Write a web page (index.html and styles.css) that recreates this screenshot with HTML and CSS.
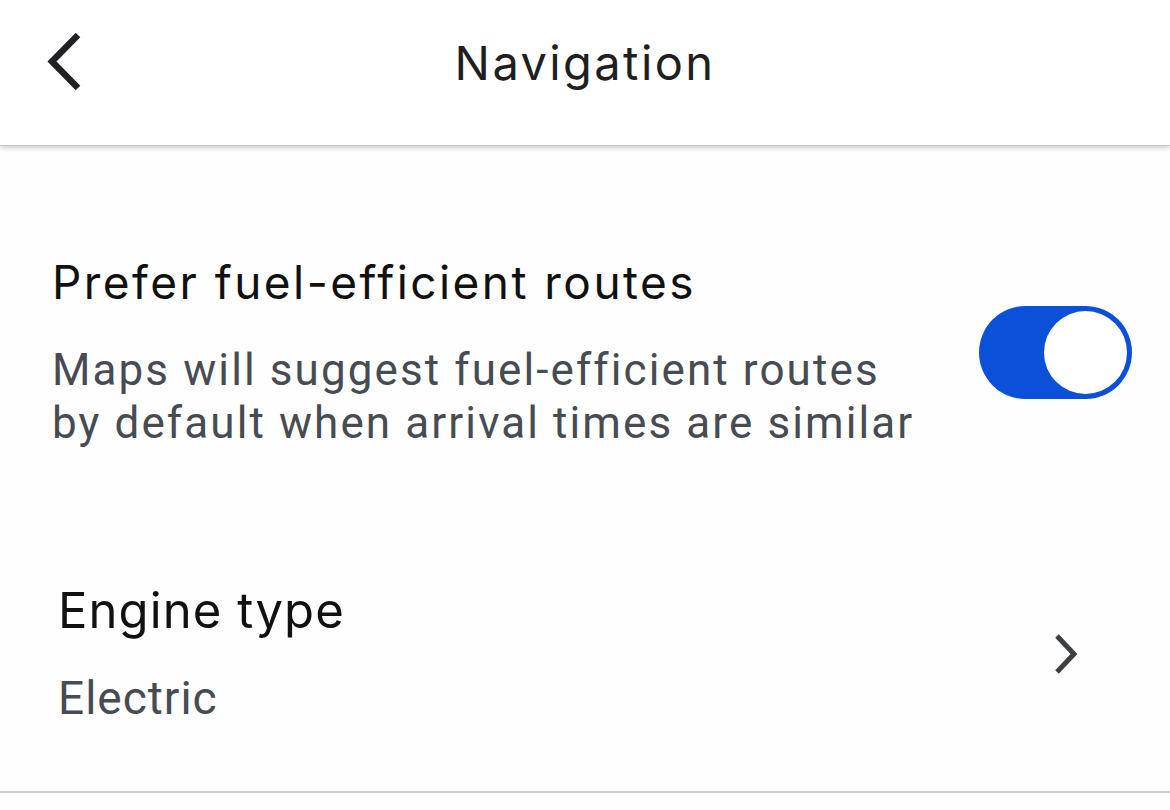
FILE: index.html
```html
<!DOCTYPE html>
<html lang="en">
<head>
  <meta charset="UTF-8">
  <meta name="viewport" content="width=device-width, initial-scale=1.0">
  <title>Navigation</title>
  <link rel="stylesheet" href="styles.css">
</head>
<body>
  <div class="header">
    <button class="back" aria-label="Back">
      <svg width="40" height="64" viewBox="0 0 40 64">
        <path d="M34 5 L8 31.5 L34 58" fill="none" stroke="#1f2125" stroke-width="6.5"/>
      </svg>
    </button>
    <div class="title">Navigation</div>
  </div>

  <div class="settings">
    <div class="row toggle-row">
      <div class="text">
        <div class="label">Prefer fuel-efficient routes</div>
        <div class="desc">Maps will suggest fuel-efficient routes<br>by default when arrival times are similar</div>
      </div>
      <div class="switch on"><div class="knob"></div></div>
    </div>

    <div class="row link-row">
      <div class="text">
        <div class="label big">Engine type</div>
        <div class="value">Electric</div>
      </div>
      <svg class="chevron" width="26" height="42" viewBox="0 0 26 42">
        <path d="M3 2 L20 20 L3 38" fill="none" stroke="#3c4043" stroke-width="5"/>
      </svg>
    </div>
  </div>
</body>
</html>
```

FILE: styles.css
```css
body {
  margin: 0;
  background: #fefefe;
  font-family: Roboto, "Noto Sans", sans-serif;
  width: 1170px;
  height: 810px;
  overflow: hidden;
}

.header {
  height: 146px;
  background: #fff;
  position: relative;
  display: flex;
  align-items: center;
  justify-content: center;
  box-shadow: 0 2px 5px rgba(0, 0, 0, 0.2);
  border-bottom: 1px solid #c8c8c8;
  padding-bottom: 20px;
  box-sizing: border-box;
}

.back {
  position: absolute;
  left: 44px;
  top: 30px;
  background: none;
  border: none;
  padding: 0;
}

.title {
  font-family: Inter, Roboto, sans-serif;
  font-size: 47px;
  letter-spacing: 2.4px;
  color: #1f1f1f;
}

.settings {
  border-bottom: 2px solid #cfcfcf;
}

.row {
  display: flex;
  justify-content: space-between;
  align-items: flex-start;
}

.toggle-row {
  padding: 108px 38px 0 52px;
  height: 437px;
  box-sizing: border-box;
}

.label {
  font-family: Inter, Roboto, sans-serif;
  font-size: 46px;
  letter-spacing: 2.45px;
  color: #111;
  line-height: 56px;
}

.label.big {
  font-size: 49px;
  letter-spacing: 1.1px;
}

.desc {
  font-size: 44px;
  letter-spacing: 2.1px;
  line-height: 53px;
  color: #474b52;
  margin-top: 34px;
}

.switch {
  width: 153px;
  height: 93px;
  border-radius: 47px;
  background: #0a50d8;
  margin-top: 52px;
  display: flex;
  align-items: center;
  justify-content: flex-end;
  padding: 0 5px;
  box-sizing: border-box;
}

.knob {
  width: 83px;
  height: 83px;
  border-radius: 50%;
  background: #fff;
}

.link-row {
  padding: 0 90px 0 58px;
  height: 208px;
  box-sizing: border-box;
}

.value {
  font-size: 46px;
  letter-spacing: 1px;
  color: #474b52;
  margin-top: 32px;
}

.chevron {
  margin-top: 51px;
}
```
